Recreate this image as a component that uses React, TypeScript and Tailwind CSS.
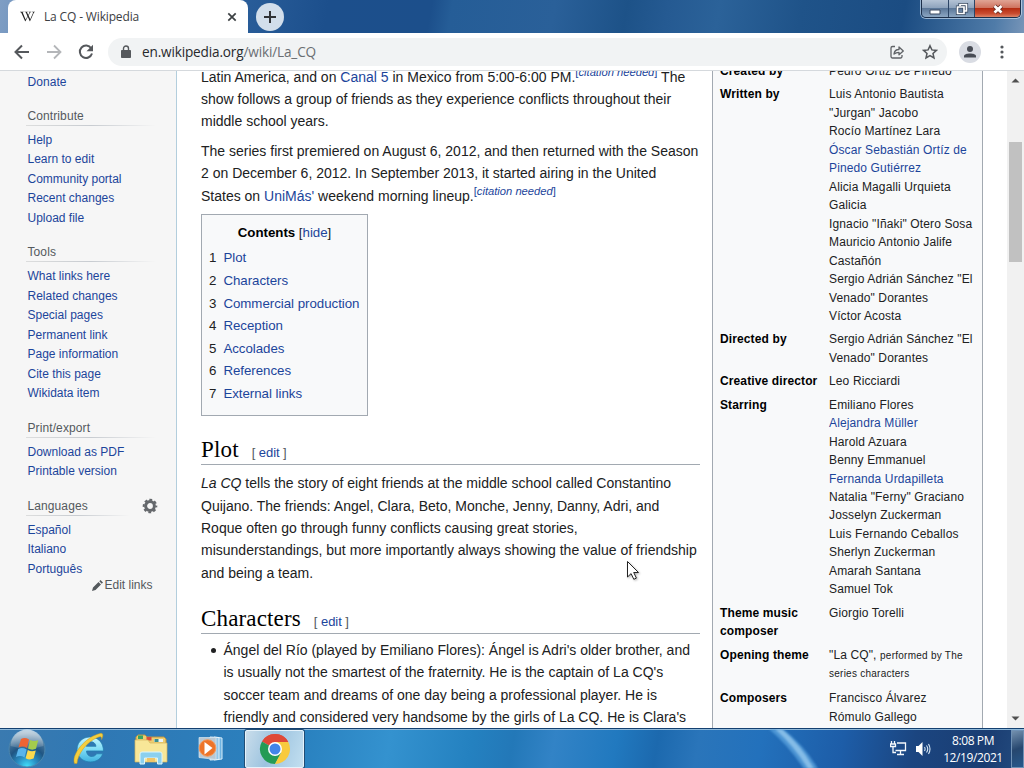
import type { ReactNode } from "react";
import { FaWikipediaW } from "react-icons/fa";

const A = ({ children }: { children: ReactNode }) => (
  <a className="text-[#1c459b]">{children}</a>
);

const Cite = () => (
  <span className="relative -top-[6px] text-[11.2px] leading-none text-[#1c459b]">
    [<i>citation needed</i>]
  </span>
);

function TitleBar() {
  return (
    <header className="flex h-[33px] shrink-0 items-start bg-[linear-gradient(100deg,#7f9ec4_0%,#5f88b8_6%,#2c609c_22%,#1c4f8c_32%,#1c4f8b_42%,#255d97_44%,#2a6099_54%,#1d5288_61%,#255a92_65%,#2b6299_70%,#1f5389_78%,#1b4c82_88%,#4f7ba8_97%,#7795b8_100%)]">
      <div className="ml-2 flex h-[33px] w-[240px] items-center rounded-t-lg bg-white pl-3 pr-[9px]">
        <FaWikipediaW className="mr-[9px] text-[15px] text-[#222]" />
        <span className="flex-1 font-['Open_Sans',sans-serif] text-[12px] tracking-[-0.15px] text-[#3c4043]">La CQ - Wikipedia</span>
        <svg width="14" height="14" viewBox="0 0 14 14" stroke="#3c4043" strokeWidth="1.700" fill="none">
          <path d="M3.300 3.300l7.400 7.400M10.700 3.300l-7.400 7.400" />
        </svg>
      </div>
      <div className="ml-2 mt-[3px] flex h-7 w-7 items-center justify-center rounded-full bg-[#d2deeb]">
        <svg width="14" height="14" viewBox="0 0 14 14" stroke="#303236" strokeWidth="2"><path d="M7 1v12M1 7h12" /></svg>
      </div>
      <div className="ml-auto mr-[3px] flex h-[18px] overflow-hidden rounded-b-[5px] border border-t-0 border-[#1c2f4a] shadow-[0_0_0_1px_rgba(200,220,240,0.7)]">
        <div className="flex w-[27px] items-center justify-center border-r border-[#2c4566] bg-[linear-gradient(#b4c3d5,#8fa4bd_45%,#5c7899_50%,#8ba6c2)]">
          <svg width="14" height="14" viewBox="0 0 14 14"><path d="M2 8h10v4H2z" fill="#fff" stroke="#3a4b62" strokeWidth="1" /></svg>
        </div>
        <div className="flex w-[26px] items-center justify-center border-r border-[#2c4566] bg-[linear-gradient(#b4c3d5,#8fa4bd_45%,#5c7899_50%,#8ba6c2)]">
          <svg width="14" height="14" viewBox="0 0 14 14" fill="none">
            <path d="M5 4V2.500h6.500v6.500h-2M2.500 5h6.500v6.500h-6.500z" stroke="#35465d" strokeWidth="3.200" />
            <path d="M5 4V2.500h6.500v6.500h-2M2.500 5h6.500v6.500h-6.500z" stroke="#fff" strokeWidth="1.700" />
          </svg>
        </div>
        <div className="flex w-[45px] items-center justify-center bg-[linear-gradient(#e0a494,#cf7460_45%,#b52d12_50%,#c94c30_80%,#dc8468)]">
          <svg width="14" height="14" viewBox="0 0 14 14" fill="none">
            <path d="M3.500 4l7 6.500M10.500 4l-7 6.500" stroke="#602a22" strokeWidth="4.400" />
            <path d="M3.500 4l7 6.500M10.500 4l-7 6.500" stroke="#fff" strokeWidth="2.800" />
          </svg>
        </div>
      </div>
    </header>
  );
}

function Toolbar() {
  return (
    <div className="flex h-[38px] shrink-0 items-center border-b border-[#d5d9dd] bg-white pl-[13px]">
      <svg width="18" height="18" viewBox="0 0 18 18" fill="none" stroke="#55585c" strokeWidth="2"><path d="M16 9H3M9 2.500L2.500 9 9 15.500" /></svg>
      <svg className="ml-[14px]" width="18" height="18" viewBox="0 0 18 18" fill="none" stroke="#b4b6b9" strokeWidth="1.800"><path d="M2 9h13M9 2.500L15.500 9 9 15.500" /></svg>
      <svg className="ml-[14px]" width="18" height="18" viewBox="0 0 18 18" fill="none">
        <path d="M14.200 5.200A6.200 6.200 0 1 0 15 10.500" stroke="#55585c" strokeWidth="2" />
        <path d="M16 1.800v6.500H9.500z" fill="#55585c" />
      </svg>
      <div className="ml-[13px] flex h-7 w-[839px] items-center rounded-full bg-[#f1f3f4] pl-3">
        <svg width="12" height="14" viewBox="0 0 12 14"><path d="M1.500 5.500h9v7h-9z" fill="#55585c" stroke="#55585c" strokeLinejoin="round" /><path d="M3.500 6V3.500a2.500 2.500 0 0 1 5 0V6" fill="none" stroke="#55585c" strokeWidth="1.400" /></svg>
        <span className="ml-[10px] flex-1 pt-[2px] font-['Open_Sans',sans-serif] text-[13.6px] tracking-[-0.16px] text-[#6a6e72]">
          <span className="text-[#27292c]">en.wikipedia.org</span>/wiki/La_CQ
        </span>
        <svg className="mr-[17px]" width="16" height="16" viewBox="0 0 16 16" fill="none" stroke="#606367" strokeWidth="1.300" strokeLinejoin="round">
          <path d="M6 2.500H3.500a1.500 1.500 0 0 0-1.500 1.500v8.500A1.500 1.500 0 0 0 3.500 14h8a1.500 1.500 0 0 0 1.500-1.500V11" />
          <path d="M5 10c.4-3 2-4.500 5-4.500V3l4.300 4L10 10.800V8.300C8 8.300 6.500 8.700 5 10z" />
        </svg>
        <svg className="mr-[9px]" width="16" height="16" viewBox="0 0 16 16" fill="none" stroke="#55585c" strokeWidth="1.500"><path d="M8 1.700l1.900 4.200 4.500.5-3.400 3.100 1 4.500L8 11.700 4 14l1-4.500-3.400-3.100 4.500-.5z" /></svg>
      </div>
      <div className="ml-[12px] flex h-[22px] w-[22px] items-center justify-center rounded-full bg-[#d9dce3]">
        <svg width="14" height="14" viewBox="0 0 14 14" fill="#484c55"><circle cx="7" cy="4" r="3" /><path d="M1 12.500v-1.500c0-3.500 12-3.500 12 0v1.500z" /></svg>
      </div>
      <svg className="ml-[18px]" width="6" height="16" viewBox="0 0 6 16" fill="#55585c"><circle cx="3" cy="3" r="1.600" /><circle cx="3" cy="8" r="1.600" /><circle cx="3" cy="13" r="1.600" /></svg>
    </div>
  );
}

function NavGroup({ title, items, gear }: { title: string; items: string[]; gear?: boolean }) {
  return (
    <section className="mb-[15px]">
      <div className="relative flex h-[18px] items-center pl-[27.5px] text-[12px] tracking-[0.1px] text-[#54595d]">
        {title}
        {gear && (
          <svg className="absolute left-[142px] top-[1px]" width="16" height="16" viewBox="0 0 16 16" fill="none" stroke="#65686c">
            <circle cx="8" cy="8" r="4.400" strokeWidth="3" />
            <circle cx="8" cy="8" r="6.300" strokeWidth="2" strokeDasharray="2.800 2.148" strokeDashoffset="1.400" />
          </svg>
        )}
      </div>
      <div className={gear ? "mb-[5px] ml-[26px] h-px w-[104px] bg-[linear-gradient(90deg,#dcdddd,#c8ccd1_50%,#f6f6f6)]" : "mb-[5px] ml-[26px] h-px w-[130px] bg-[linear-gradient(90deg,#dcdddd,#c8ccd1_50%,#f6f6f6)]"} />
      <ul className="pl-[27.5px] text-[12px] leading-[19.5px] text-[#1c459b]">
        {items.map((t) => <li key={t}>{t}</li>)}
      </ul>
    </section>
  );
}

function Sidebar() {
  return (
    <nav className="w-[177px] shrink-0 border-r border-[#b3cedd] bg-[#f6f6f6]">
      <div className="mb-[14px] pl-[27.500px] pt-[2px] text-[12px] leading-[19.500px] tracking-[0.05px] text-[#1c459b]">Donate</div>
      <NavGroup title="Contribute" items={["Help", "Learn to edit", "Community portal", "Recent changes", "Upload file"]} />
      <NavGroup title="Tools" items={["What links here", "Related changes", "Special pages", "Permanent link", "Page information", "Cite this page", "Wikidata item"]} />
      <NavGroup title="Print/export" items={["Download as PDF", "Printable version"]} />
      <NavGroup title="Languages" items={["Español", "Italiano", "Português"]} gear />
      <div className="-mt-[18px] flex items-center pl-[91.5px] text-[12px] leading-[19px] text-[#54595d]">
        <svg className="mr-[2px]" width="11" height="11" viewBox="0 0 11 11" fill="#54595d"><path d="M0 11l1-3.500 5.500-5.500L9 4.500 3.500 10zM7.300 1.300L8.500 0 11 2.500 9.700 3.700z" /></svg>
        Edit links
      </div>
    </nav>
  );
}

function Lines({ children }: { children: ReactNode[] }) {
  return <>{children.map((c, i) => <div key={i} className="h-[22.4px] whitespace-pre leading-[22.4px]">{c}</div>)}</>;
}

function Heading({ children }: { children: string }) {
  return (
    <h2 className="flex h-[31px] items-baseline border-b border-[#a2a9b1] font-['Liberation_Serif',serif] text-[23px] leading-[32px] tracking-[0.15px] text-black">
      {children}
      <span className="ml-[13px] font-['Liberation_Sans',Arial,sans-serif] text-[13px] tracking-[-0.05px] text-[#54595d]">[ <A>edit</A> ]</span>
    </h2>
  );
}

const contents = ["Plot", "Characters", "Commercial production", "Reception", "Accolades", "References", "External links"];

function Article() {
  return (
    <main className="-mt-[5.4px] ml-6 w-[499px] shrink-0 text-[14px] text-[#202122]">
      <Lines>
        <>Latin America, and on <A>Canal 5</A> in Mexico from 5:00-6:00 PM.<Cite /> The</>
        <>show follows a group of friends as they experience conflicts throughout their</>
        <>middle school years.</>
      </Lines>
      <div className="h-[7.2px]" />
      <Lines>
        <>The series first premiered on August 6, 2012, and then returned with the Season</>
        <>2 on December 6, 2012. In September 2013, it started airing in the United</>
        <>States on <A>UniMás'</A> weekend morning lineup.<Cite /></>
      </Lines>
      <div className="mt-[7.2px] h-[202px] w-[167px] border border-[#a2a9b1] bg-[#f8f9fa] pl-[7px] text-[13.3px] tracking-[-0.03px]">
        <div className="mt-[7px] h-[25px] pr-[7px] text-center leading-[22px]"><b className="text-black">Contents</b> [<A>hide</A>]</div>
        {contents.map((c, i) => (
          <div key={c} className="flex h-[22.600px] gap-[7px] leading-[22.600px]"><span>{i + 1}</span><A>{c}</A></div>
        ))}
      </div>
      <div className="mt-[18px]"><Heading>Plot</Heading></div>
      <div className="h-[6.900px]" />
      <Lines>
        <><i>La CQ</i> tells the story of eight friends at the middle school called Constantino</>
        <>Quijano. The friends: Angel, Clara, Beto, Monche, Jenny, Danny, Adri, and</>
        <>Roque often go through funny conflicts causing great stories,</>
        <>misunderstandings, but more importantly always showing the value of friendship</>
        <>and being a team.</>
      </Lines>
      <div className="mt-[19.100px]"><Heading>Characters</Heading></div>
      <div className="mt-[4.600px] flex">
        <div className="mt-[9px] ml-[10px] mr-[7.500px] h-[5px] w-[5px] rounded-full bg-[#202122]" />
        <div>
          <Lines>
            <>Ángel del Río (played by Emiliano Flores): Ángel is Adri's older brother, and</>
            <>is usually not the smartest of the fraternity. He is the captain of La CQ's</>
            <>soccer team and dreams of one day being a professional player. He is</>
            <>friendly and considered very handsome by the girls of La CQ. He is Clara's</>
          </Lines>
        </div>
      </div>
    </main>
  );
}

const rows: { label: string[]; value: ReactNode[]; loose?: boolean }[] = [
  { label: ["Created by"], value: ["Pedro Ortiz De Pinedo"] },
  { label: ["Written by"], value: ["Luis Antonio Bautista", "\"Jurgan\" Jacobo", "Rocío Martínez Lara", <A>Óscar Sebastián Ortíz de</A>, <A>Pinedo Gutiérrez</A>, "Alicia Magalli Urquieta", "Galicia", "Ignacio \"Iñaki\" Otero Sosa", "Mauricio Antonio Jalife", "Castañón", "Sergio Adrián Sánchez \"El", "Venado\" Dorantes", "Víctor Acosta"] },
  { label: ["Directed by"], value: ["Sergio Adrián Sánchez \"El", "Venado\" Dorantes"] },
  { label: ["Creative director"], value: ["Leo Ricciardi"] },
  { label: ["Starring"], value: ["Emiliano Flores", <A>Alejandra Müller</A>, "Harold Azuara", "Benny Emmanuel", <A>Fernanda Urdapilleta</A>, "Natalia \"Ferny\" Graciano", "Josselyn Zuckerman", "Luis Fernando Ceballos", "Sherlyn Zuckerman", "Amarah Santana", "Samuel Tok"] },
  { label: ["Theme music", "composer"], value: ["Giorgio Torelli"] },
  { label: ["Opening theme"], loose: true, value: [<>"La CQ", <span className="text-[10px] tracking-[0.25px]">performed by The</span></>, <span className="text-[10px] tracking-[0.25px]">series characters</span>] },
  { label: ["Composers"], value: ["Francisco Álvarez", "Rómulo Gallego"] },
];

function Infobox() {
  return (
    <aside className="ml-3 h-[680px] w-[271px] shrink-0 border-x border-[#a2a9b1] bg-[#f8f9fa] pl-[7px] text-[12px] text-[#202122]">
      <div className="-mt-[9px]">
        {rows.map((r) => (
          <div key={r.label[0]} className={r.loose ? "mb-[6.8px] flex leading-[18.48px]" : "mb-[4.92px] flex leading-[18.48px]"}>
            <div className="w-[109px] font-bold tracking-[0.12px] text-black">{r.label.map((l) => <div key={l}>{l}</div>)}</div>
            <div className="whitespace-pre tracking-[0.13px]">{r.value.map((v, i) => <div key={i} className="h-[18.48px]">{v}</div>)}</div>
          </div>
        ))}
      </div>
    </aside>
  );
}

function Scrollbar() {
  return (
    <div className="ml-auto flex w-[17px] shrink-0 flex-col items-center bg-[#f1f1f1]">
      <svg className="mt-[5px]" width="9" height="9" viewBox="0 0 9 9"><path d="M.5 6.500L4.500 2.500l4 4z" fill="#505050" /></svg>
      <div className="mt-[57px] h-[120px] w-[13px] bg-[#c1c1c1]" />
      <svg className="mb-[5px] mt-auto" width="9" height="9" viewBox="0 0 9 9"><path d="M.5 2.500l4 4 4-4z" fill="#505050" /></svg>
    </div>
  );
}

function StartOrb() {
  return (
    <svg width="40" height="40" viewBox="0 0 40 40">
      <defs>
        <radialGradient id="orb" cx="50%" cy="98%" r="90%"><stop offset="0" stopColor="#3fe0fb" /><stop offset=".3" stopColor="#2a8fc4" /><stop offset=".6" stopColor="#1f5583" /><stop offset="1" stopColor="#5d87a8" /></radialGradient>
        <linearGradient id="gloss" x2="0" y2="1"><stop stopColor="#fff" stopOpacity=".7" /><stop offset="1" stopColor="#fff" stopOpacity=".1" /></linearGradient>
      </defs>
      <circle cx="20" cy="20" r="18" fill="url(#orb)" stroke="#4b86ae" />
      <path d="M3.500 17a16.500 16.500 0 0 1 33 0Q20 22 3.500 17z" fill="url(#gloss)" />
      <path d="M14 10q4-2 8 .5l-2 8.500q-4-2.500-8.500-.5z" fill="#ee6434" />
      <path d="M23.200 11q3.800 2 8 .3l-2.200 8.500q-4 1.800-8-.3z" fill="#a3cb4d" />
      <path d="M11.200 20q4-2 8.500.5l-2.200 8q-4-2.500-8.500-.5z" fill="#59b4ec" />
      <path d="M20.800 21q3.800 2.200 8 .4l-2.200 8.200q-4 1.800-8-.4z" fill="#fdd94e" />
    </svg>
  );
}

function Taskbar() {
  return (
    <footer className="relative flex h-10 shrink-0 items-center overflow-hidden border-t border-[#144070] bg-[linear-gradient(100deg,#3a7ab0_0%,#2f78b4_10%,#2a82c0_30%,#3492cf_38%,#2481c0_46%,#2378b8_50%,#3283c6_54%,#2179bf_60%,#1c69ae_64%,#2a75ba_68%,#2371bc_74%,#1d5da8_82%,#1b4580_89%,#1a3d72_96%,#244c7f_100%)] shadow-[inset_0_1px_0_#8fb9da]">
      <svg className="absolute left-[750px] top-0 blur-[1px]" width="80" height="40" viewBox="0 0 80 40"><path d="M19 0h14q22 17 35 40H54Q38 16 19 0z" fill="#5da5e0" opacity=".7" /><path d="M25 0h7q20 17 32 40h-6Q45 18 25 0z" fill="#9acbef" opacity=".75" /></svg>
      <div className="ml-[7px] w-[63px]"><StartOrb /></div>
      <svg className="ml-[2px]" width="36" height="36" viewBox="0 0 36 36">
        <defs><linearGradient id="ie" x2="0" y2="1"><stop stopColor="#c4f4ff" /><stop offset=".5" stopColor="#7edcf6" /><stop offset="1" stopColor="#3fb2e0" /></linearGradient></defs>
        <path d="M31.500 20H14.500c.3 6.500 8 7 10 2.800h6.200C26.500 35.500 5 33 5 18.500 5 2 31.500 1 31.500 20zM14.200 15.300h9.800c-.8-6-9-6-9.800 0z" fill="url(#ie)" stroke="#257fb0" strokeWidth=".8" />
        <path d="M2.500 32.500C-1 24 13 6 28 2.500c4-1 3 3.500 1.500 6 .5-3-1-3.500-4-2C15 10.500 5.500 23 5 32.500z" fill="#f4ce3e" stroke="#c79a22" strokeWidth=".5" />
      </svg>
      <svg className="ml-[25px]" width="36" height="36" viewBox="0 0 36 36">
        <path d="M3 6l2-2h7l2 2h17l2 2v22H3z" fill="#edce72" stroke="#bc9543" />
        <path d="M5 4.500h5v3.500H5z" fill="#37a464" /><path d="M13.500 6h5v3.500h-5z" fill="#d94d3b" /><path d="M21 8h9v3h-9z" fill="#eaf4fb" /><path d="M21.500 8h4v3h-4z" fill="#3b8f8c" />
        <path d="M2 9h13l2 3h17v19H2z" fill="#f8e798" stroke="#d5b45c" strokeWidth=".7" />
        <path d="M7 33V23q0-2 2-2h18q2 0 2 2v10h-4.500v-6h-13v6z" fill="#8bd0ee" stroke="#dcf5fc" /><path d="M14 27h8v4h-8z" fill="#f0c568" />
      </svg>
      <svg className="ml-[25px]" width="34" height="34" viewBox="0 0 34 34">
        <path d="M20 5l8 1v21l-8 1z" fill="#6fb4e2" stroke="#d8edf9" /><path d="M16 5l9 .5v22l-9 .5z" fill="#92c6e8" stroke="#e4f2fa" />
        <path d="M5 5.500h17v22L5 25.500z" fill="#b8c8d4" stroke="#d8e8f2" strokeWidth=".7" /><circle cx="13.500" cy="16" r="8.300" fill="#ed7429" stroke="#f49a5c" /><path d="M10.500 10l8 6-8 6.500z" fill="#fff" />
      </svg>
      <div className="ml-[17px] flex h-[38px] w-[59px] items-center justify-center rounded-[2px] border border-[#e5f2fb] bg-[linear-gradient(110deg,#c9ddeb,#9cc3df_45%,#a7cbe4_60%,#c2dff0)] shadow-[0_0_0_1px_#204d75]">
        <svg width="32" height="32" viewBox="0 0 32 32">
          <path d="M16 16L3 8.500A15 15 0 0 1 29 8.500z" fill="#df4937" />
          <path d="M16 16L3 8.500A15 15 0 0 0 16 31l6.500-11.300z" fill="#249b55" />
          <path d="M16 9h13.300A15 15 0 0 1 16 31l6.100-11.500z" fill="#f8ca3e" />
          <path d="M3 8.500A15 15 0 0 1 29.300 9H16z" fill="#df4937" />
          <circle cx="16" cy="16" r="7" fill="#fff" /><circle cx="16" cy="16" r="5.500" fill="#4285e8" />
        </svg>
      </div>
      <div className="relative ml-auto flex items-center">
        <svg className="mr-[8px]" width="17" height="17" viewBox="0 0 17 17" fill="none" stroke="#f4f8fc" strokeWidth="1.300">
          <path d="M7 3h8.500v7.500H5.500M10.500 10.500v3.500M7 14.500h7M1.500 1v3M4.500 1v3M.5 4h5v2.500h-5zM3 6.500v6h3" />
        </svg>
        <svg className="mr-[12px]" width="16" height="16" viewBox="0 0 16 16"><path d="M1 5h2.500l4-4v14l-4-4H1z" fill="#fff" /><path d="M9.500 6q1.200 2 0 4M11.500 4.500q2.500 3.500 0 7M13.500 3q3 5 0 10" fill="none" stroke="#d7e7f5" strokeWidth="1.100" /></svg>
        <div className="w-[60px] text-center font-['Open_Sans',sans-serif] text-[12px] leading-[17px] tracking-[-0.4px] text-white"><div>8:08 PM</div><div>12/19/2021</div></div>
      </div>
      <div className="ml-[8px] h-[38px] w-[13px] border border-[#6f91b5] bg-[linear-gradient(160deg,#7390ae,#27476f_50%,#27588b)]" />
    </footer>
  );
}

export default function App() {
  return (
    <div className="relative flex h-[768px] w-[1024px] flex-col overflow-hidden bg-white font-['Liberation_Sans',Arial,sans-serif]">
      <TitleBar />
      <Toolbar />
      <div className="flex min-h-0 flex-1 overflow-hidden">
        <Sidebar />
        <Article />
        <Infobox />
        <Scrollbar />
      </div>
      <Taskbar />
      <svg className="absolute left-[626px] top-[560px] drop-shadow-[1px_1px_1px_rgba(0,0,0,0.3)]" width="14" height="21" viewBox="0 0 14 21"><path d="M1.500 1.500v15.500l3.600-3.400 2.700 5.700 2.600-1.200-2.700-5.600h4.800z" fill="#fff" stroke="#222" /></svg>
    </div>
  );
}
